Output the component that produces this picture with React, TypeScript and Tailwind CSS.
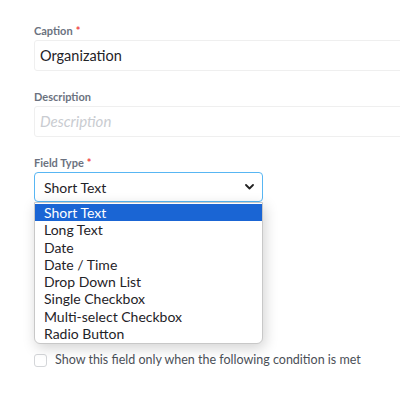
const OPTIONS = [
  'Short Text',
  'Long Text',
  'Date',
  'Date / Time',
  'Drop Down List',
  'Single Checkbox',
  'Multi-select Checkbox',
  'Radio Button',
]

function Label({ text, required }: { text: string; required?: boolean }) {
  return (
    <p className="text-[11px] font-bold text-[#6b7280] leading-[14px] mb-[2px]">
      {text}
      {required && <span className="text-[#ef4444] ml-[3px]">*</span>}
    </p>
  )
}

export default function App() {
  return (
    <div className="w-[400px] h-[400px] overflow-hidden bg-white pl-[34px] pt-[24px] font-['Lato','Liberation_Sans',sans-serif]">
      {/* Caption */}
      <Label text="Caption" required />
      <div className="h-[31px] w-[420px] border border-[#efefef] rounded-[3px] flex items-center px-[5px] text-[14.5px] text-[#1f2328]">
        Organization
      </div>

      {/* Description */}
      <div className="mt-[19px]">
        <Label text="Description" />
        <div className="h-[31px] w-[420px] border border-[#efefef] rounded-[3px] flex items-center px-[5px] text-[15px] italic text-[#c9ccd1]">
          Description
        </div>
      </div>

      {/* Field type */}
      <div className="mt-[19px] relative">
        <Label text="Field Type" required />
        <div className="h-[30px] w-[229px] border border-[#58b6f3] rounded-[4px] flex items-center justify-between pl-[9px] pr-[8px] text-[14px] text-[#1f2328]">
          <span>Short Text</span>
          <svg width="9" height="6" viewBox="0 0 9 6" fill="none">
            <path d="M1 1l3.5 3.5L8 1" stroke="#222" strokeWidth="1.8" strokeLinecap="round" strokeLinejoin="round" />
          </svg>
        </div>

        {/* native select popup */}
        <div className="absolute left-0 top-[46px] w-[229px] bg-white border border-[#c8c8c8] rounded-b-[6px] py-[1px] shadow-[2px_4px_14px_rgba(0,0,0,0.18)] z-10">
          {OPTIONS.map((o, i) => (
            <div
              key={o}
              className={`h-[17.25px] leading-[17.25px] pl-[9px] text-[14px] ${i === 0 ? 'bg-[#1a65d4] text-white' : 'text-[#1f2328]'}`}
            >
              {o}
            </div>
          ))}
        </div>
      </div>

      {/* condition */}
      <div className="mt-[149px] flex items-center gap-[8px]">
        <span className="w-[13px] h-[13px] border border-[#d4d6d9] rounded-[3px] bg-white" />
        <span className="text-[12.5px] text-[#4b5058]">Show this field only when the following condition is met</span>
      </div>
    </div>
  )
}
